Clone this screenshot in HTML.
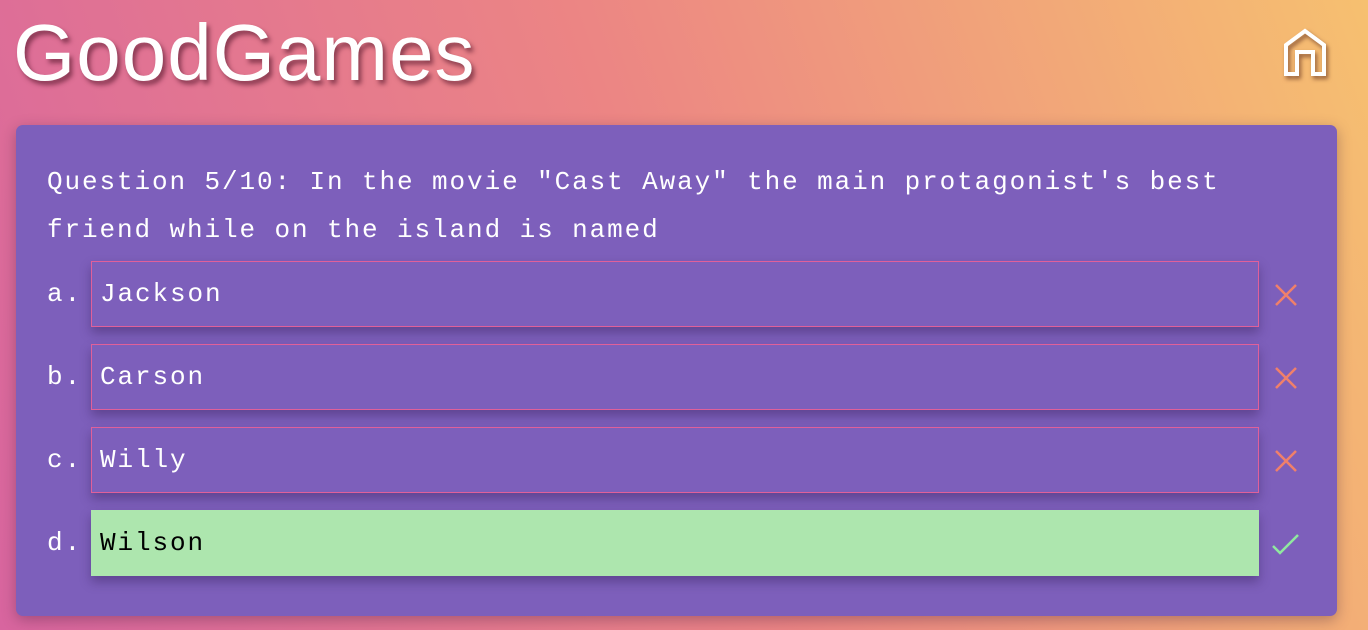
<!DOCTYPE html>
<html><head><style>
body{margin:0;width:1368px;height:630px;overflow:hidden;background:linear-gradient(70deg,#d8659f 0%,#ec8584 50%,#f6c070 100%);font-family:"Liberation Mono",monospace;position:relative}
h1{position:absolute;left:13px;top:7px;margin:0;font-family:"Liberation Sans",sans-serif;font-weight:normal;font-size:80px;color:#fff;text-shadow:3px 4px 5px rgba(80,20,40,.6);letter-spacing:1px}
.home{position:absolute;left:1283px;top:28px}
.card{position:absolute;left:16px;top:125px;width:1321px;height:491px;background:#7d5fbb;border-radius:7px;box-shadow:0 4px 14px rgba(60,30,60,.35)}
.q{position:absolute;left:31px;top:33px;color:#fff;font-size:26px;letter-spacing:1.9px;line-height:48px}
.row{position:absolute;left:0;width:1321px;height:66px}
.lab{position:absolute;left:31px;top:0;line-height:66px;color:#fff;font-size:26px;letter-spacing:2px}
.box{position:absolute;left:75px;top:0;height:64px;border:1px solid #e0609a;box-shadow:0 6px 10px rgba(40,20,70,.35);color:#fff;font-size:26px;letter-spacing:1.9px;line-height:64px;padding-left:8px;width:1158px}
.ok{background:#ade6ae;border-color:#ade6ae;color:#000}
.ic{position:absolute;left:1258px;top:22px}
</style></head><body>
<h1>GoodGames</h1>
<svg class="home" width="46" height="48" viewBox="0 0 46 48" style="filter:drop-shadow(2px 3px 2px rgba(80,30,20,.6))"><path d="M3 46V17L22 3L41 17V46H30V24H14V46Z" fill="none" stroke="#fff" stroke-width="4"/></svg>
<div class="card">
<div class="q">Question 5/10: In the movie "Cast Away" the main protagonist's best<br>friend while on the island is named</div>
<div class="row" style="top:136px"><div class="lab">a.</div><div class="box">Jackson</div><svg class="ic" width="24" height="24"><path d="M2 2L22 22M22 2L2 22" stroke="#f0806a" stroke-width="2.5"/></svg></div>
<div class="row" style="top:219px"><div class="lab">b.</div><div class="box">Carson</div><svg class="ic" width="24" height="24"><path d="M2 2L22 22M22 2L2 22" stroke="#f0806a" stroke-width="2.5"/></svg></div>
<div class="row" style="top:302px"><div class="lab">c.</div><div class="box">Willy</div><svg class="ic" width="24" height="24"><path d="M2 2L22 22M22 2L2 22" stroke="#f0806a" stroke-width="2.5"/></svg></div>
<div class="row" style="top:385px"><div class="lab">d.</div><div class="box ok">Wilson</div><svg class="ic" width="28" height="24" style="left:1256px"><path d="M1 14L8 21L26 3" fill="none" stroke="#90e8a0" stroke-width="2.5"/></svg></div>
</div>
</body></html>
